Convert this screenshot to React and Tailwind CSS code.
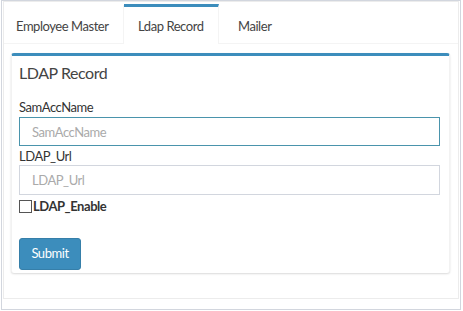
export default function App() {
  return (
    <div className="w-[463px] h-[311px] bg-white tracking-[-0.45px]" style={{ fontFamily: "Lato, 'Liberation Sans', sans-serif" }}>
      <div className="ml-[1px] w-[460px] h-[310px] border border-[#d2d6de]">
        <div className="bg-white border border-[#ececec] mx-[1px] mb-[10px]">
          {/* tabs */}
          <div className="flex h-[42px] border-b border-[#f4f4f4] pt-[2px] text-[13px] text-[#444]">
            <div className="w-[120px] pl-[12px] pt-[4px] flex items-center h-[39px] mt-[1px] border-r border-[#f4f4f4]">Employee Master</div>
            <div className="w-[95px] pl-[14px] pt-[3px] flex items-center h-[40px] border-t-[3px] border-t-[#3c8dbc] border-r border-r-[#f4f4f4] bg-white">Ldap Record</div>
            <div className="pl-[19px] pt-[4px] flex items-center h-[39px] mt-[1px]">Mailer</div>
          </div>
          {/* content */}
          <div className="pl-[7px] pr-[8px] pt-[9px] pb-[25px]">
            <div className="bg-white border-t-[3px] border-t-[#3c8dbc] rounded-[3px] shadow-[0_1px_2px_rgba(0,0,0,0.15)] border-x border-x-[#f2f2f2] pl-[7px] pr-[9px] pt-[6px] pb-[3px]">
              <div className="text-[16px] text-[#444] leading-[22px] mb-[15px]">LDAP Record</div>
              <label className="block text-[13px] text-[#333] leading-[16px] mb-[2px]">SamAccName</label>
              <div className="h-[29px] border-[1px] border-solid border-[color:#4a94ac] text-[#4a94ac] flex items-center">
                <input placeholder="SamAccName" className="w-full h-full pl-[12px] text-[13px] text-[#333] outline-none border-0 placeholder:text-[#aaa]" />
              </div>
              <label className="block text-[13px] text-[#333] leading-[16px] mt-[2px] mb-[1px]">LDAP_Url</label>
              <div className="h-[30px] border border-[#d2d6de] flex items-center">
                <input placeholder="LDAP_Url" className="w-full h-full pl-[12px] text-[13px] outline-none border-0 placeholder:text-[#aaa]" />
              </div>
              <label className="flex items-center leading-[16px] text-[13px] font-bold text-[#333] mt-[3px]">
                <span className="inline-block w-[13px] h-[13px] border border-[#555] bg-white mr-[1px]" />
                LDAP_Enable
              </label>
              <div className="mt-[24px]">
                <button className="bg-[#3c8dbc] border border-[#367fa9] text-white text-[13px] rounded-[3px] w-[62px] h-[32px]">Submit</button>
              </div>
            </div>
          </div>
        </div>
      </div>
    </div>
  );
}
